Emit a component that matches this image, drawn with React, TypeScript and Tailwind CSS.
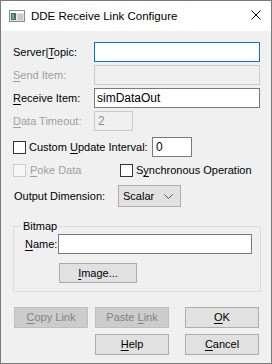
import type { ReactNode } from "react";

function Key({ children }: { children: ReactNode }) {
  return <span className="underline decoration-1 underline-offset-[2px]">{children}</span>;
}

function Check({ disabled }: { disabled?: boolean }) {
  return (
    <span
      className={
        disabled
          ? "block h-[13px] w-[13px] shrink-0 border border-[#cccccc] bg-[#f7f7f7]"
          : "block h-[13px] w-[13px] shrink-0 border border-[#333333] bg-white"
      }
    />
  );
}

function Button({ children, disabled, className }: { children: ReactNode; disabled?: boolean; className?: string }) {
  return (
    <div
      className={
        (disabled
          ? "border-[#bfbfbf] bg-[#cccccc] text-[#838383] "
          : "border-[#adadad] bg-[#e1e1e1] text-black ") +
        "flex h-[21px] w-[74px] items-center justify-center border " +
        (className ?? "")
      }
    >
      {children}
    </div>
  );
}

export default function App() {
  return (
    <div className="flex h-[364px] w-[272px] flex-col whitespace-nowrap border border-[#7a7a7a] bg-[#f0f0f0] font-['Liberation_Sans',Arial,sans-serif] text-[11px] leading-none text-black">
      {/* title bar */}
      <div className="flex h-[30px] shrink-0 items-center bg-white pl-[8px] pr-[10px]">
        <svg width="16" height="12" viewBox="0 0 16 12">
          <rect x="0.5" y="0.5" width="15" height="11" fill="#e4e4e4" stroke="#8a8a8a" />
          <rect x="1" y="1" width="14" height="2" fill="#ffffff" />
          <rect x="2" y="3" width="5" height="7" fill="#3f7664" />
          <rect x="3" y="4" width="2" height="5" fill="#6fa58f" />
          <rect x="9" y="4" width="5" height="6" fill="#c9c9c9" />
        </svg>
        <span className="ml-[6px] mt-[1px] flex-1 text-[11.5px]">DDE Receive Link Configure</span>
        <svg width="10" height="10" viewBox="0 0 10 10" className="mb-[2px]">
          <path d="M0.5 0.5 L9.5 9.5 M9.5 0.5 L0.5 9.5" stroke="#000" strokeWidth="1" />
        </svg>
      </div>

      {/* body */}
      <div className="flex flex-col pl-[12px] pt-[11px]">
        <div className="flex h-[20px] items-center">
          <span className="w-[81px]">Server|<Key>T</Key>opic:</span>
          <div className="h-[20px] w-[166px] border border-[#0078d7] bg-white" />
        </div>
        <div className="mt-[3px] flex h-[20px] items-center text-[#a0a0a0]">
          <span className="w-[81px]"><Key>S</Key>end Item:</span>
          <div className="h-[20px] w-[166px] border border-[#cccccc] bg-[#f0f0f0]" />
        </div>
        <div className="mt-[3px] flex h-[20px] items-center">
          <span className="w-[81px]"><Key>R</Key>eceive Item:</span>
          <div className="flex h-[20px] w-[166px] items-center border border-[#7a7a7a] bg-white pl-[2px] text-[12px]">simDataOut</div>
        </div>
        <div className="mt-[3px] flex h-[20px] items-center text-[#a0a0a0]">
          <span className="w-[81px]"><Key>D</Key>ata Timeout:</span>
          <div className="flex h-[20px] w-[39px] items-center border border-[#cccccc] bg-[#f0f0f0] pl-[3px] text-[12px] text-[#8a8a8a]">2</div>
        </div>

        <div className="mt-[6px] flex h-[20px] items-center">
          <Check />
          <span className="ml-[3px] w-[123px]">Custom <Key>U</Key>pdate Interval:</span>
          <div className="flex h-[20px] w-[40px] items-center border border-[#7a7a7a] bg-white pl-[3px] text-[12px]">0</div>
        </div>

        <div className="mt-[7px] flex h-[13px] items-center">
          <Check disabled />
          <span className="ml-[4px] w-[90px] text-[#a0a0a0]"><Key>P</Key>oke Data</span>
          <Check />
          <span className="ml-[3px]">S<Key>y</Key>nchronous Operation</span>
        </div>

        <div className="mt-[8px] flex h-[22px] items-center">
          <span className="w-[105px] pl-[1px]">Output Dimension:</span>
          <div className="flex h-[22px] w-[63px] items-center border border-[#adadad] bg-[#e1e1e1] pl-[4px]">
            <span className="flex-1">Scalar</span>
            <svg width="9" height="5" viewBox="0 0 9 5" className="mr-[7px]">
              <path d="M0.5 0.5 L4.5 4.5 L8.5 0.5" fill="none" stroke="#555" strokeWidth="1" />
            </svg>
          </div>
        </div>

        {/* Bitmap group */}
        <div className="relative mt-[19px] h-[66px] w-[248px] border border-[#dcdcdc] pl-[11px] pt-[7px]">
          <span className="absolute left-[7px] top-[-6px] bg-[#f0f0f0] px-[2px]">Bitmap</span>
          <div className="flex h-[20px] items-center">
            <span className="w-[33px]"><Key>N</Key>ame:</span>
            <div className="h-[20px] w-[194px] border border-[#7a7a7a] bg-white" />
          </div>
          <div className="ml-[34px] mt-[9px] flex h-[20px] w-[78px] items-center justify-center border border-[#adadad] bg-[#e1e1e1]">
            <span><Key>I</Key>mage...</span>
          </div>
        </div>

        <div className="mt-[15px] flex items-center pl-[1px]">
          <Button disabled><span><Key>C</Key>opy Link</span></Button>
          <Button disabled className="ml-[7px]"><span>Paste <Key>L</Key>ink</span></Button>
          <Button className="ml-[16px]"><span><Key>O</Key>K</span></Button>
        </div>
        <div className="mt-[6px] flex items-center pl-[82px]">
          <Button><span><Key>H</Key>elp</span></Button>
          <Button className="ml-[16px]"><span><Key>C</Key>ancel</span></Button>
        </div>
      </div>
    </div>
  );
}
